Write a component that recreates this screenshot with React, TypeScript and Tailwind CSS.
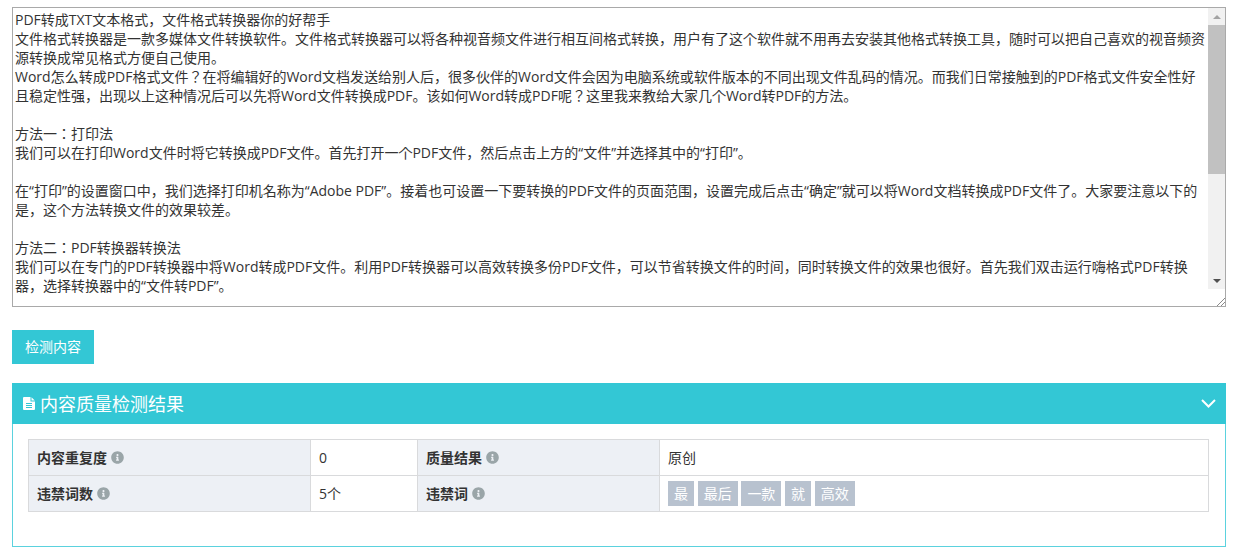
import { FaInfoCircle } from 'react-icons/fa'

const articleText = `PDF转成TXT文本格式，文件格式转换器你的好帮手
文件格式转换器是一款多媒体文件转换软件。文件格式转换器可以将各种视音频文件进行相互间格式转换，用户有了这个软件就不用再去安装其他格式转换工具，随时可以把自己喜欢的视音频资源转换成常见格式方便自己使用。
Word怎么转成PDF格式文件？在将编辑好的Word文档发送给别人后，很多伙伴的Word文件会因为电脑系统或软件版本的不同出现文件乱码的情况。而我们日常接触到的PDF格式文件安全性好且稳定性强，出现以上这种情况后可以先将Word文件转换成PDF。该如何Word转成PDF呢？这里我来教给大家几个Word转PDF的方法。

方法一：打印法
我们可以在打印Word文件时将它转换成PDF文件。首先打开一个PDF文件，然后点击上方的“文件”并选择其中的“打印”。

在“打印”的设置窗口中，我们选择打印机名称为“Adobe PDF”。接着也可设置一下要转换的PDF文件的页面范围，设置完成后点击“确定”就可以将Word文档转换成PDF文件了。大家要注意以下的是，这个方法转换文件的效果较差。

方法二：PDF转换器转换法
我们可以在专门的PDF转换器中将Word转成PDF文件。利用PDF转换器可以高效转换多份PDF文件，可以节省转换文件的时间，同时转换文件的效果也很好。首先我们双击运行嗨格式PDF转换器，选择转换器中的“文件转PDF”。
`

const bannedWords = ['最', '最后', '一款', '就', '高效']

function Label({ text }: { text: string }) {
  return (
    <th className="border border-[#d9dadc] bg-[#edf0f5] px-2 text-left font-bold text-[#333]">
      <span className="inline-flex items-center gap-1">
        {text}
        <FaInfoCircle className="text-[13px] text-[#9aa5a8]" />
      </span>
    </th>
  )
}

export default function App() {
  return (
    <div className="min-h-[556px] bg-white pl-3 pr-2.5 pt-[7px] font-['Open_Sans','Noto_Sans_CJK_SC',sans-serif] text-sm text-[#333]">
      {/* textarea with the scrollbar drawn beside it */}
      <div className="flex h-[300px] border border-[#a9a9a9]">
        <textarea
          readOnly
          value={articleText}
          className="min-w-0 flex-1 resize-none overflow-hidden px-0.5 py-0.5 font-['Open_Sans','Noto_Sans_CJK_JP',sans-serif] text-sm leading-[19px] text-[#333] outline-none"
        />
        <div className="flex w-[17px] flex-col bg-[#f1f1f1]">
          <div className="flex h-[17px] items-center justify-center">
            <div className="h-0 w-0 border-x-[4px] border-b-[4px] border-x-transparent border-b-[#a3a3a3]" />
          </div>
          <div className="h-[149px] bg-[#c1c1c1]" />
          <div className="flex-1" />
          <div className="flex h-[17px] items-center justify-center">
            <div className="h-0 w-0 border-x-[4px] border-t-[4px] border-x-transparent border-t-[#505050]" />
          </div>
          <div className="flex h-[17px] items-end justify-end bg-white">
            <svg width="10" height="10" viewBox="0 0 10 10" stroke="#8a8a8a" strokeWidth="1">
              <path d="M2 10 L10 2 M6 10 L10 6" />
            </svg>
          </div>
        </div>
      </div>

      <button className="mt-[23px] block h-[34px] w-[82px] bg-[#33c7d5] text-sm text-white">检测内容</button>

      <div className="mt-[19px] h-[164px] border border-[#5bd2de]">
        <div className="-mx-px -mt-px flex h-[41px] items-center justify-between bg-[#33c7d5] pl-[11px] pr-[10px] text-white">
          <div className="flex items-center gap-[5px] text-lg">
            <svg width="12" height="13" viewBox="0 0 12 13" fill="white">
              <path d="M1 0 H7.5 V4.5 H12 V12 A1 1 0 0 1 11 13 H1 A1 1 0 0 1 0 12 V1 A1 1 0 0 1 1 0 Z M8.5 0.2 L11.8 3.5 H8.5 Z M3 6 V7 H9 V6 Z M3 8 V9 H9 V8 Z M3 10 V11 H9 V10 Z" fillRule="evenodd" />
            </svg>
            内容质量检测结果
          </div>
          <svg width="15" height="9" viewBox="0 0 15 9" fill="none" stroke="white" strokeWidth="2">
            <path d="M1 1 L7.5 7.5 L14 1" />
          </svg>
        </div>

        <div className="pl-[15px] pr-4 pt-[15px]">
          <table className="w-full table-fixed border-collapse">
            <colgroup>
              <col className="w-[282px]" />
              <col className="w-[107px]" />
              <col className="w-[242px]" />
              <col />
            </colgroup>
            <tbody>
              <tr className="h-9">
                <Label text="内容重复度" />
                <td className="border border-[#d9dadc] px-2">0</td>
                <Label text="质量结果" />
                <td className="border border-[#d9dadc] px-2">原创</td>
              </tr>
              <tr className="h-9">
                <Label text="违禁词数" />
                <td className="border border-[#d9dadc] px-2">5个</td>
                <Label text="违禁词" />
                <td className="border border-[#d9dadc] px-2">
                  <div className="flex gap-[3.7px]">
                    {bannedWords.map((word) => (
                      <span key={word} className="flex h-[25px] items-center bg-[#b8c2cf] px-1.5 text-white">
                        {word}
                      </span>
                    ))}
                  </div>
                </td>
              </tr>
            </tbody>
          </table>
        </div>
      </div>
    </div>
  )
}
